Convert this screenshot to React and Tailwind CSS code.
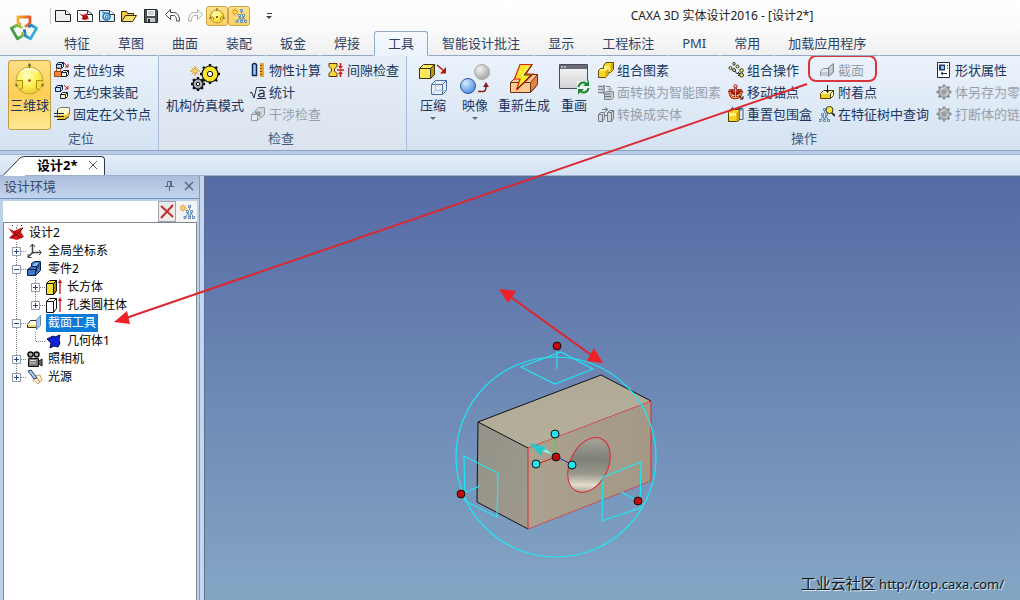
import React from "react";

/* ---------- icon helpers ---------- */

function Svg({ size = 16, children, className = "" }) {
  return (
    <svg
      width={size}
      height={size}
      viewBox={`0 0 ${size} ${size}`}
      className={`block shrink-0 ${className}`}
      fill="none"
      aria-hidden="true"
    >
      {children}
    </svg>
  );
}

function MiniCube({ x, y, fill = "#bfe4ff" }) {
  return (
    <g transform={`translate(${x} ${y})`} stroke="#14224a" strokeLinejoin="round">
      <path d="M.5 2.500 2.500.5h5v4l-2 2h-5z" fill={fill} />
      <path d="M.5 2.500h5v4M5.500 2.500l2-2" />
    </g>
  );
}

function Gear({ cx, cy, r, fill, stroke = "#111" }) {
  return (
    <g transform={`translate(${cx} ${cy})`}>
      {[0, 45, 90, 135].map((a) => (
        <path key={a} d={`M${-r - 2} 0H${r + 2}`} stroke={stroke} strokeWidth="2.500" transform={`rotate(${a})`} />
      ))}
      <circle r={r} fill={fill} stroke={stroke} strokeWidth="1.200" />
      <circle r={r / 3} fill="#fff" stroke={stroke} />
    </g>
  );
}

function Spark({ cx, cy, r }) {
  return (
    <g transform={`translate(${cx} ${cy})`} stroke="#d98c12">
      <path d={`M0 ${-r}V${r}M${-r} 0H${r}`} strokeWidth="1.200" />
      <path d={`M${-r * 0.7} ${-r * 0.7}L${r * 0.7} ${r * 0.7}M${r * 0.7} ${-r * 0.7}L${-r * 0.7} ${r * 0.7}`} />
      <circle r="1.500" fill="#ffe14a" stroke="none" />
    </g>
  );
}

function TreeNodes({ color = "#5d8bb8" }) {
  return (
    <g stroke={color} fill="#eef6ff">
      <path d="M10.500 3v2M9 8 6.500 12M12 8l2.500 4M9 8l1.500 4M12 8l-1.500 4" />
      <path d="M9.500.5h2v2h-2zM7.500 5.500h2v2h-2zM11.500 5.500h2v2h-2zM5 11.500h2v2h-2zM9.500 11.500h2v2h-2zM13.500 11.500h2v2h-2z" />
    </g>
  );
}

const ball = (
  <defs>
    <radialGradient id="ballFill" cx=".4" cy=".32" r=".75">
      <stop offset="0" stopColor="#fffdc4" />
      <stop offset=".55" stopColor="#fdf050" />
      <stop offset="1" stopColor="#e6c02c" />
    </radialGradient>
  </defs>
);

const icons = {
  logo: (
    <Svg size={28}>
      <defs>
        <linearGradient id="logoTop" x2="1">
          <stop offset="0" stopColor="#f6b32c" />
          <stop offset="1" stopColor="#e4572a" />
        </linearGradient>
        <linearGradient id="logoRight" x2="0" y2="1">
          <stop offset="0" stopColor="#3cb0dd" />
          <stop offset="1" stopColor="#2467b4" />
        </linearGradient>
        <linearGradient id="logoLeft" x2="0" y2="1">
          <stop offset="0" stopColor="#3f9b45" />
          <stop offset="1" stopColor="#a9cf45" />
        </linearGradient>
      </defs>
      <g strokeWidth="2.800" strokeLinejoin="round">
        <path d="M11 11 8 9V3h12v6l-5 4" stroke="url(#logoTop)" />
        <path d="M11 11 8 9V3h12v6l-5 4" stroke="url(#logoRight)" transform="rotate(120 14 14)" />
        <path d="M11 11 8 9V3h12v6l-5 4" stroke="url(#logoLeft)" transform="rotate(240 14 14)" />
      </g>
    </Svg>
  ),
  newDoc: (
    <Svg>
      <path d="M.5 2.500h10l5 4v7H.5z" fill="#eceef3" stroke="#222" />
      <path d="M10.500 2.500v4h5" fill="#fff" stroke="#222" />
    </Svg>
  ),
  newPart: (
    <Svg>
      <path d="M.5 2.500h10l5 4v7H.5z" fill="#fff" stroke="#333" />
      <path d="M10.500 2.500v4h5" stroke="#333" />
      <path d="m2 5 4 2 5-2-1 3 2 3-4 1-4-1 2-2z" fill="#d3151c" />
      <path d="m6 7 1 4 4-3" stroke="#611" />
    </Svg>
  ),
  newSheet: (
    <Svg>
      <path d="M.5 2.500h10l5 4v7H.5z" fill="#d8ecfb" stroke="#333" />
      <path d="M10.500 2.500v4h5" fill="#fff" stroke="#333" />
      <circle cx="7.500" cy="8.500" r="3.500" stroke="#1877bd" strokeWidth="1.500" />
      <path d="M7 7h2v3H6zM3 4l3 1" stroke="#1877bd" />
    </Svg>
  ),
  open: (
    <Svg>
      <path d="M.5 13.500v-10h5l1 2h6v3" fill="#f3c944" stroke="#3a2c05" />
      <path d="m.5 13.500 4-6h11l-4 6z" fill="#ffe273" stroke="#3a2c05" />
    </Svg>
  ),
  save: (
    <Svg>
      <path d="M1.500 1.500h12l1 1v12h-13z" fill="#4a4f58" stroke="#23262c" />
      <path d="M4 2h8v6H4z" fill="#f6f7f9" />
      <path d="M4 10h8v4H4z" fill="#c3c7ce" />
      <path d="M5 11h2v3H5z" fill="#23262c" />
      <path d="M5 4h6M5 6h6" stroke="#a6abb5" />
    </Svg>
  ),
  undo: (
    <Svg>
      <path d="m.5 6.500 5-5v3h3c4 0 6 3 6 8.500h-3c0-4-1-5.500-3-5.500h-3v4z" fill="#fff" stroke="#444" strokeLinejoin="round" />
    </Svg>
  ),
  redo: (
    <Svg>
      <path d="m15.500 6.500-5-5v3h-3c-4 0-6 3-6 8.500h3c0-4 1-5.500 3-5.500h3v4z" fill="#fafafa" stroke="#a9adb4" strokeLinejoin="round" />
    </Svg>
  ),
  ballSmall: (
    <Svg>
      <circle cx="8" cy="8.500" r="6.500" fill="url(#ballFill)" stroke="#b8932a" />
      <path d="M8 0v3" stroke="#555" />
      <path d="M1 9h3l1 3M15 9h-3l-1 3" stroke="#b88b10" />
      <path d="M7 8h2v2H7z" fill="#a4571a" />
      <path d="M0 10h2M14 10h2" stroke="#555" />
    </Svg>
  ),
  treeNew: (
    <Svg>
      <g transform="translate(0 1)"><TreeNodes /></g>
      <Spark cx={4} cy={4} r={3.5} />
    </Svg>
  ),
  ballLarge: (
    <Svg size={32}>
      {ball}
      <circle cx="15.500" cy="17.500" r="13.500" fill="url(#ballFill)" stroke="#c3a238" />
      <path d="M15.500 2v5" stroke="#555" />
      <path d="m15.500 0 2 3h-4z" fill="#6b6526" />
      <path d="M7 9q8-6 17 0" stroke="#fffee0" strokeWidth="2" />
      <path d="M2.500 17.500h6v8l-3 1M28.500 17.500h-6v8l3 1" stroke="#a98d14" fill="#f3df36" />
      <path d="M1 20.500l3 1.500-2 2zM30 20.500 27 22l2 2z" fill="#6b6526" />
      <circle cx="15.500" cy="17.500" r="1.300" fill="#b0400e" />
    </Svg>
  ),
  constrain: (
    <Svg>
      <MiniCube x={2} y={0} />
      <path d="m10 1 4 4M14 2v3h-3" stroke="#c61a1a" />
      <path d="M2.500 9V7.500a2 2 0 0 1 4 0V9" stroke="#b65313" />
      <path d="M.5 9.500h7v5h-7z" fill="#f2863a" stroke="#9c420c" />
      <MiniCube x={7} y={8} fill="#fff4b3" />
    </Svg>
  ),
  unconstrain: (
    <Svg>
      <MiniCube x={1} y={1} />
      <path d="m10 1 4 4M14 2v3h-3" stroke="#c61a1a" />
      <MiniCube x={6} y={8} fill="#fff4b3" />
    </Svg>
  ),
  fixParent: (
    <Svg>
      <path d="m3.500 3.500 3-2h9v7l-4 3h-8z" fill="#fff9cf" stroke="#777" />
      <path d="M4 9h8l3-3v4l-4 4H4z" fill="#f2c22b" />
      <path d="M3.500 4v3.500M0 7.500h10M0 10.500h10M3 13.500h8l4-3" stroke="#222" />
    </Svg>
  ),
  mechanism: (
    <Svg size={32}>
      <Spark cx={6} cy={8} r={5} />
      <Gear cx={21} cy={11} r={8} fill="#f9e32c" />
      <Gear cx={9} cy={21} r={5} fill="#aab0ba" />
    </Svg>
  ),
  property: (
    <Svg>
      <path d="M2.500 2.500q2-2 4 0v11h-4z" fill="#9dc7f5" stroke="#15265c" strokeWidth="1.500" />
      <path d="M10 1h4v14h-4z" fill="#e5a62b" />
      <path d="M10 3.500h2M10 6.500h2M10 9.500h2M10 12.500h2" stroke="#7b4c06" />
    </Svg>
  ),
  stats: (
    <Svg>
      <path d="m0 9 1.500-1L4 14 6.500 3.500H16" stroke="#1f2a48" />
      <path d="M9 7q5-2 5 1v5M14 9.500q-5-.5-5.500 2 .5 2.500 5.500.5M7 14.500h9" stroke="#1f2a48" strokeWidth="1.200" />
    </Svg>
  ),
  interfere: (
    <Svg>
      <path d="m5.500 4.500 3-3h6v7l-3 3h-6z" fill="#d5d9de" stroke="#969ca4" />
      <path d="M1.500 8.500 4 6h6v6l-2.500 2.500h-6z" fill="#e9ebee" stroke="#969ca4" />
      <path d="M1.500 8.500h6v6M7.500 8.500 10 6" stroke="#969ca4" />
      <path d="M5 6h5v4H7V8H5z" fill="#989da5" />
    </Svg>
  ),
  gap: (
    <Svg>
      <path d="M1 1.500h8v3L6.500 7v2L9 11.500v3H1v-3L3.500 9V7L1 4.500z" fill="#f8d63b" stroke="#5a3b04" />
      <path d="M9 8h7M12.500 1v5M12.500 10v5" stroke="#c31818" strokeWidth="1.500" />
      <path d="M10 4h5l-2.500 3zM10 12h5l-2.500-3z" fill="#d81b1b" />
    </Svg>
  ),
  compress: (
    <Svg size={32}>
      <path d="m2.500 5.500 4-4h11v10l-4 4h-11z" fill="#fbe65d" stroke="#39330a" />
      <path d="M13.500 5.500v10l4-4v-10z" fill="#b89812" stroke="#39330a" />
      <path d="M2.500 5.500h11l4-4" stroke="#39330a" />
      <path d="m20 2 7 6" stroke="#ba1515" strokeWidth="1.500" />
      <path d="M29 10.500V4l-6 6.500z" fill="#ba1515" />
      <path d="m14.500 21.500 4-4h11v10l-4 4h-11z" fill="#eef4ff" fillOpacity=".5" stroke="#4a6fae" />
      <path d="M14.500 21.500h11v10M25.500 21.500l4-4" stroke="#4a6fae" />
      <path d="M18.500 18v9.500h11M18.500 27.500l-4 4" stroke="#a9bfe0" />
    </Svg>
  ),
  mirror: (
    <Svg size={32}>
      <defs>
        <radialGradient id="mirrorGray" cx=".35" cy=".3" r=".75">
          <stop offset="0" stopColor="#f3f3f3" />
          <stop offset="1" stopColor="#a2a2a2" />
        </radialGradient>
        <radialGradient id="mirrorBlue" cx=".35" cy=".3" r=".75">
          <stop offset="0" stopColor="#d7ecff" />
          <stop offset="1" stopColor="#4b8ce0" />
        </radialGradient>
      </defs>
      <circle cx="23" cy="9" r="7.500" fill="url(#mirrorGray)" stroke="#aaa" />
      <circle cx="9" cy="23" r="7.500" fill="url(#mirrorBlue)" stroke="#39588f" />
      <path d="M19 28.500h5q3 0 3-5" stroke="#8b1c1c" strokeWidth="1.500" />
      <path d="m27 19 3 5h-6z" fill="#8b1c1c" />
    </Svg>
  ),
  regenerate: (
    <Svg size={32}>
      <path d="m2.500 19.500 8-8h19v10l-7 8h-20z" fill="#ffc994" stroke="#6b3210" />
      <path d="M22.500 19.500v10l7-8v-10z" fill="#e38445" stroke="#6b3210" />
      <path d="M2.500 19.500h20" stroke="#6b3210" />
      <path d="M12 1.500h12L18 11h7L8.500 27l3.500-11H6.500z" fill="#ffe62e" stroke="#d8230c" strokeWidth="1.200" />
      <path d="m24 2-8 10h7L9 26" stroke="#3c2a06" />
      <path d="m20 4-6 9" stroke="#fffaa8" />
    </Svg>
  ),
  redraw: (
    <Svg size={32}>
      <defs>
        <linearGradient id="redrawWin" x2="0" y2="1">
          <stop offset="0" stopColor="#fafafa" />
          <stop offset="1" stopColor="#cfd1d5" />
        </linearGradient>
      </defs>
      <path d="M1.500 1.500h28v24h-28z" fill="url(#redrawWin)" stroke="#4a4c57" />
      <path d="M2 2h27v4H2z" fill="#6a6c79" />
      <path d="M3 4h2M6 4h2" stroke="#fff" />
      <path d="M19 18h13v13H19z" fill="#eef3f5" />
      <path d="M20.500 24q1-5 6-4.500l2 1.500M30.500 25q-1 5-6 4.500l-2-1.500" stroke="#168a28" strokeWidth="2" />
      <path d="M31 17.500V23h-6zM20 31.500V26h6z" fill="#168a28" />
    </Svg>
  ),
  combine: (
    <Svg>
      <path d="M5.500 3.500 8 .5h7.500v7l-3 3h-2v2l-3 3h-7v-7l2-2h3z" fill="#f9d527" stroke="#604c05" strokeLinejoin="round" />
      <path d="M6 4h6v4H8l-1 1H1.500L3 7h3z" fill="#fff27a" />
      <path d="m12.500 3.500 2.500-3v6l-2.500 3zM7.500 9.500l3-3v6l-3 3z" fill="#d9a90f" />
    </Svg>
  ),
  faceConvert: (
    <Svg>
      <path d="M0 2.500h6M0 5.500h5M0 8.500h6M6 1v9" stroke="#7f858d" strokeWidth="1.500" />
      <path d="M8 2.500h4v3M10 4.500l2 2 2-2" stroke="#7f858d" />
      <path d="m6.500 9.500 2-2h7v6l-2 2h-7z" fill="#c8ccd1" stroke="#7f858d" />
      <path d="M7 10h6M7 12.500h6" stroke="#6e747c" />
    </Svg>
  ),
  solidConvert: (
    <Svg>
      <path d="M4 3.500h5M7 1.500l3 2-3 2" stroke="#747a82" />
      <path d="m.5 8.500 2-2h4v6l-2 3h-4zM.5 8.500h4v7M9.500 6.500l2-2h4v8l-2 3h-4zM9.500 6.500h4v9M13.500 6.500l2-2" fill="#d5d9dd" stroke="#747a82" />
      <path d="M7 9.500h2" stroke="#747a82" />
    </Svg>
  ),
  combineOps: (
    <Svg>
      <path d="M7 9q1 3 4 3M10 10l2 2-2 2" stroke="#222" />
      <g fill="#e9f08a" stroke="#333">
        <circle cx="2.500" cy="6" r="1.500" />
        <circle cx="6" cy="1.800" r="1.300" />
        <circle cx="9.500" cy="4.500" r="1.500" />
        <circle cx="6" cy="8" r="1.500" />
        <circle cx="13.500" cy="8.500" r="1.800" fill="#e9ee45" />
        <circle cx="13.500" cy="13" r="2" fill="#e9ee45" />
      </g>
    </Svg>
  ),
  anchor: (
    <Svg>
      <path d="M7.500 3v11M2 7v3q1 4 5.500 4T13 10V7M4.500 5v3q0 2 3 2t3-2V5" stroke="#a01808" strokeWidth="2.500" />
      <path d="M7.500 2v12M2 8v2q1 4 5.500 4T13 10V8" stroke="#f3bf3a" />
      <circle cx="7.500" cy="2.300" r="1.600" stroke="#a01808" />
      <path d="m0 8.500 2-3.500 2 3.500M11 8.500 13 5l2 3.500" stroke="#a01808" />
      <path d="m11 12 4 3M15 12v3h-3" stroke="#3a1208" />
    </Svg>
  ),
  resetBox: (
    <Svg>
      <path d="M3 2.500h12v11M4.500.5v4M13 1v4M11 13.500h4" stroke="#3d5b88" />
      <path d="M.5 6.500q0-3 3-3h8v9q0 3-3 3h-8z" fill="#f6d322" stroke="#514203" />
      <path d="M1 7h7v3H1z" fill="#fff581" />
      <path d="M8.500 7v8l3-3V4z" fill="#cda011" />
    </Svg>
  ),
  section: (
    <Svg>
      <path d="m1.500 9.500 3-3h5v7h-8z" fill="#e7eaed" stroke="#858b93" />
      <path d="M2 10h7v4H2z" fill="#c7cbd0" />
      <path d="m9.500 5.500 5-4v9l-5 4z" fill="#b7bcc2" stroke="#858b93" />
      <path d="m11.500 5 1-1v6l-1 1z" fill="#e7eaed" />
    </Svg>
  ),
  attach: (
    <Svg>
      <path d="m1.500 9.500 3-3h10v5l-3 3h-10z" fill="#fff6b1" stroke="#4d4412" />
      <path d="M2 10h9v4H2z" fill="#f4cf1d" />
      <path d="M11.500 9.500v5M11.500 9.500l3-3" stroke="#4d4412" />
      <path d="M8.500 1v7" stroke="#222" />
      <path d="M6 6h5L8.500 9z" fill="#222" />
    </Svg>
  ),
  findTree: (
    <Svg>
      <g transform="translate(-5 2)"><TreeNodes color="#5a86b1" /></g>
      <circle cx="10.500" cy="4" r="3.500" fill="#ffe536" stroke="#333" />
      <path d="m13 7 3 3" stroke="#333" strokeWidth="2" />
    </Svg>
  ),
  shape: (
    <Svg>
      <path d="M1.500.5h12v15h-12z" fill="#fff" stroke="#1f2a48" />
      <path d="M3 2.500h6v6H3z" fill="#1d3c6d" />
      <path d="M5 4h3v3H5z" fill="#9ac7f0" />
      <path d="M11 3.500h1M11 6h1M5 11.500h6M7 10l-2 1.500L7 13" stroke="#1f2a48" />
    </Svg>
  ),
  gearGray: (
    <Svg>
      <Gear cx={8} cy={8} r={5.5} fill="#b3b7bc" stroke="#8a8f96" />
      <path d="m4 6 5-3M10 12l3-4" stroke="#dfe2e5" />
      <circle cx="8" cy="8" r="2" fill="#989da4" />
    </Svg>
  ),
  redX: (
    <Svg>
      <path d="m2 2 12 11M14 1 2 14" stroke="#c92a2a" strokeWidth="2" />
    </Svg>
  ),
  design: (
    <Svg>
      <path d="m0 3 6 3 9-4-2 5 3 5-7 3-8-2 4-4z" fill="#d21a1e" />
      <path d="m6 6 2 4 7-7M8 10l-6 3M8 10l6 3" stroke="#6b0b0c" />
      <path d="M4 .5h1M9 0h1M13 .5h1M8 3h1" stroke="#222" />
    </Svg>
  ),
  axes: (
    <Svg>
      <path d="M5.500 11V1M5.500 9.500H14M5.500 9.500 1 14" stroke="#444" strokeWidth="1.500" />
      <path d="m3 4 2.500-3L8 4M12 7l2.500 2.500L12 12M1 11v3.500h3.500" stroke="#444" />
    </Svg>
  ),
  part: (
    <Svg>
      <path d="m.5 8.500 4-3v-3l3-2h6v9l-5 5h-8z" fill="#3b78c8" stroke="#0d2148" />
      <path d="M.5 8.500h8v6M4.500 5.500h5l4-4M9.500 5.500v5M8.500 8.500l4-4" stroke="#0d2148" />
      <path d="m5 5 3-3h4L9.500 5z" fill="#8dbdf2" />
    </Svg>
  ),
  box: (
    <Svg>
      <path d="m.5 4.500 3-3h7v10l-3 4h-7z" fill="#f7dd39" stroke="#111" />
      <path d="M7.500 4.500v11l3-4v-10z" fill="#a58b10" stroke="#111" />
      <path d="M.5 4.500h7l3-3" stroke="#111" />
      <path d="M14 15V3" stroke="#c51616" strokeWidth="1.300" />
      <path d="m14 0 2 4h-4z" fill="#c51616" />
    </Svg>
  ),
  hole: (
    <Svg>
      <path d="m.5 4.500 3-3h7v10l-3 4h-7zM.5 4.500h7v11M7.500 4.500l3-3" fill="#fff" stroke="#111" />
      <path d="M14 15V3" stroke="#c51616" strokeWidth="1.300" />
      <path d="m14 0 2 4h-4z" fill="#c51616" />
    </Svg>
  ),
  sectionColor: (
    <Svg>
      <path d="m.5 9.500 3-4h6v7h-9z" fill="#fffce0" stroke="#333" />
      <path d="M1 10h8v2H1z" fill="#f2db4d" />
      <path d="m9.500 4.500 4-4v10l-4 4z" fill="#a8cbe8" stroke="#6b8ba8" />
    </Svg>
  ),
  geometry: (
    <Svg>
      <path d="m1 6 6-3 2 1 5-2-1 5 1 3-2 4-4-1-4 2 1-5z" fill="#1123d8" stroke="#060b55" />
    </Svg>
  ),
  camera: (
    <Svg>
      <circle cx="3.500" cy="3.500" r="2.500" fill="#aaa" stroke="#111" strokeWidth="1.500" />
      <circle cx="9.500" cy="3.500" r="2.500" fill="#aaa" stroke="#111" strokeWidth="1.500" />
      <path d="M1.500 7.500h10v8h-10z" fill="#777" stroke="#111" />
      <path d="m12 10 3-2v7l-3-2" fill="#666" stroke="#111" />
      <path d="M3 9.500h6M3 12h6" stroke="#ddd" />
    </Svg>
  ),
  light: (
    <Svg>
      <path d="m7 7 6-1 2 5-4 4-5-4z" fill="#fff1c8" stroke="#c5a36b" />
      <path d="m1 2 3-1 6 8-3 1z" fill="#a8cbf0" stroke="#234174" />
      <path d="m10 9 3 4" stroke="#d77a4a" />
    </Svg>
  ),
};

/* ---------- ribbon ---------- */

const tabs = ["特征", "草图", "曲面", "装配", "钣金", "焊接", "工具", "智能设计批注", "显示", "工程标注", "PMI", "常用", "加载应用程序"];

function SmallButton({ icon, label, disabled, marked }) {
  return (
    <button
      type="button"
      disabled={disabled}
      className={`relative flex h-[22px] items-center gap-[3px] whitespace-nowrap ${disabled ? "text-[#97a0ab]" : "text-[#20365f]"}`}
    >
      {icons[icon]}
      <span>{label}</span>
      {marked && <span className="absolute -top-1 -right-[13px] -left-[11px] h-[27px] rounded-lg border-2 border-[#d9353f]" />}
    </button>
  );
}

function Column({ items, className = "" }) {
  return (
    <div className={`flex shrink-0 flex-col items-start ${className}`}>
      {items.map((item) => (
        <SmallButton key={item.label} {...item} />
      ))}
    </div>
  );
}

function LargeButton({ icon, label, active, menu, className }) {
  return (
    <button
      type="button"
      className={`mt-px flex h-[70px] shrink-0 flex-col items-center whitespace-nowrap rounded-[3px] border pt-0.5 text-[#20365f] ${
        active ? "border-[#c29b3d] bg-linear-to-b from-[#fcdf86] via-[#fdce54] to-[#fee993]" : "border-transparent"
      } ${className}`}
    >
      {icons[icon]}
      <span className="leading-5">{label}</span>
      {menu && <span className="mt-0.5 border-x-[3px] border-t-[3px] border-x-transparent border-t-[#5f6b7c]" />}
    </button>
  );
}

function Group({ title, className, children }) {
  return (
    <section className={`flex shrink-0 flex-col border-r border-[#a9bdd8] ${className}`}>
      <div className="flex h-[72px] pt-[3px]">{children}</div>
      <h2 className="flex h-[22px] items-center justify-center pr-1 pb-0.5 text-[#405a80]">{title}</h2>
    </section>
  );
}

function Ribbon() {
  return (
    <div className="flex shrink-0 overflow-hidden border-b border-[#8da2c2] bg-linear-to-b from-[#ebf3fc] to-[#d5e2f2]">
      <Group title="定位" className="w-[159px] pl-2">
        <LargeButton icon="ballLarge" label="三维球" active className="w-[43px]" />
        <Column
          className="ml-[3px]"
          items={[
            { icon: "constrain", label: "定位约束" },
            { icon: "unconstrain", label: "无约束装配" },
            { icon: "fixParent", label: "固定在父节点" },
          ]}
        />
      </Group>
      <Group title="检查" className="w-[248px] bg-linear-to-b from-[#e6eef8] to-[#dbe3ee] pl-px">
        <LargeButton icon="mechanism" label="机构仿真模式" className="w-[90px]" />
        <Column
          className="w-[78px]"
          items={[
            { icon: "property", label: "物性计算" },
            { icon: "stats", label: "统计" },
            { icon: "interfere", label: "干涉检查", disabled: true },
          ]}
        />
        <Column items={[{ icon: "gap", label: "间隙检查" }]} />
      </Group>
      <Group title="操作" className="w-[794px] pl-[5px]">
        <LargeButton icon="compress" label="压缩" menu className="w-[42px]" />
        <LargeButton icon="mirror" label="映像" menu className="w-[42px]" />
        <LargeButton icon="regenerate" label="重新生成" className="w-[56px]" />
        <LargeButton icon="redraw" label="重画" className="w-[44px]" />
        <Column
          className="ml-0.5 w-[130px]"
          items={[
            { icon: "combine", label: "组合图素" },
            { icon: "faceConvert", label: "面转换为智能图素", disabled: true },
            { icon: "solidConvert", label: "转换成实体", disabled: true },
          ]}
        />
        <Column
          className="w-[91px]"
          items={[
            { icon: "combineOps", label: "组合操作" },
            { icon: "anchor", label: "移动锚点" },
            { icon: "resetBox", label: "重置包围盒" },
          ]}
        />
        <Column
          className="w-[117px]"
          items={[
            { icon: "section", label: "截面", disabled: true, marked: true },
            { icon: "attach", label: "附着点" },
            { icon: "findTree", label: "在特征树中查询" },
          ]}
        />
        <Column
          items={[
            { icon: "shape", label: "形状属性" },
            { icon: "gearGray", label: "体另存为零", disabled: true },
            { icon: "gearGray", label: "打断体的链", disabled: true },
          ]}
        />
      </Group>
    </div>
  );
}

/* ---------- header ---------- */

const quick = [
  ["newDoc", "新建"],
  ["newPart", "新建设计"],
  ["newSheet", "新建图纸"],
  ["open", "打开"],
  ["save", "保存"],
  ["undo", "撤销"],
  ["redo", "重做"],
];

function Header() {
  return (
    <header className="flex h-14 shrink-0 bg-linear-to-b from-white via-[#fbfbfb] to-[#efefef]">
      <button type="button" aria-label="菜单" className="flex w-[50px] shrink-0 items-center border-b border-[#92a8c6] pl-[10px]">
        {icons.logo}
      </button>
      <div className="flex min-w-0 flex-1 flex-col">
        <div className="flex h-[31px] shrink-0 items-center">
          <div className="flex items-center gap-1.5 border-l border-[#c6c6c6] pl-1">
            {quick.map(([icon, label]) => (
              <button key={icon} type="button" aria-label={label}>
                {icons[icon]}
              </button>
            ))}
          </div>
          <div className="ml-[3px] flex">
            {[["ballSmall", "三维球"], ["treeNew", "设计树"]].map(([icon, label]) => (
              <button
                key={icon}
                type="button"
                aria-label={label}
                className="flex h-5 w-[22px] items-center justify-center rounded-[3px] border border-[#cfa545] bg-linear-to-b from-[#fde08b] to-[#fdd264]"
              >
                {icons[icon]}
              </button>
            ))}
          </div>
          <button type="button" aria-label="自定义" className="ml-4 flex flex-col items-center gap-0.5">
            <span className="h-px w-[5px] bg-[#444]" />
            <span className="border-x-[3px] border-t-[3px] border-x-transparent border-t-[#444]" />
          </button>
          <h1 className="flex-1 pl-[152px] text-center text-xs whitespace-nowrap text-[#222]">CAXA 3D 实体设计2016 - [设计2*]</h1>
        </div>
        <nav className="flex h-[25px] shrink-0 whitespace-nowrap text-[#2e4263]">
          {tabs.map((tab) => (
            <button
              key={tab}
              type="button"
              className={`rounded-t-[3px] border px-[13px] pb-0.5 ${
                tab === "工具" ? "border-[#92a8c6] border-b-[#ebf3fc] bg-linear-to-b from-[#f6fafe] to-[#ebf3fc]" : "border-transparent border-b-[#92a8c6]"
              }`}
            >
              {tab}
            </button>
          ))}
          <span className="flex-1 border-b border-[#92a8c6]" />
        </nav>
      </div>
    </header>
  );
}

/* ---------- design tree ---------- */

const rows = [
  { icon: "design", label: "设计2", cells: [] },
  { icon: "axes", label: "全局坐标系", cells: ["+"] },
  { icon: "part", label: "零件2", cells: ["-"] },
  { icon: "box", label: "长方体", cells: ["|", "+"] },
  { icon: "hole", label: "孔类圆柱体", cells: ["|", "+end"] },
  { icon: "sectionColor", label: "截面工具", cells: ["-"], selected: true },
  { icon: "geometry", label: "几何体1", cells: ["|", "end"] },
  { icon: "camera", label: "照相机", cells: ["+"] },
  { icon: "light", label: "光源", cells: ["+end"] },
];

function TreeCell({ kind }) {
  const last = kind.endsWith("end");
  const boxed = kind[0] === "+" || kind[0] === "-";
  return (
    <svg width="19" height="18" className="block shrink-0" aria-hidden="true">
      <path d={last ? "M9.500 0v9" : "M9.500 0v18"} stroke="#808080" strokeDasharray="1 1" />
      {kind !== "|" && <path d="M10 9.500h9" stroke="#808080" strokeDasharray="1 1" />}
      {boxed && <path d="M5.500 5.500h8v8h-8z" fill="#fff" stroke="#8f9bab" />}
      {boxed && <path d={kind[0] === "+" ? "M7 9.500h5M9.500 7v5" : "M7 9.500h5"} stroke="#2b4a86" />}
    </svg>
  );
}

function DesignPanel() {
  return (
    <aside className="flex w-[200px] shrink-0 flex-col border-r border-[#7f9cc4] bg-[#bdd0ea]">
      <div className="flex h-[22px] shrink-0 items-center bg-linear-to-b from-[#a9bddb] to-[#c3d5ed] pr-[5px] pb-0.5 pl-1 text-[#35496b]">
        <h2 className="flex-1">设计环境</h2>
        <button type="button" aria-label="固定" className="mr-2.5">
          <svg width="9" height="10" className="block" fill="none" stroke="#58677e">
            <path d="M2.500 5.500v-5h4v5M0 5.500h9M4.500 6v4M5.500 1v4" />
          </svg>
        </button>
        <button type="button" aria-label="关闭">
          <svg width="10" height="10" className="block" stroke="#58677e" strokeWidth="1.500">
            <path d="m1 1 8 8M9 1 1 9" />
          </svg>
        </button>
      </div>
      <div className="flex min-h-0 flex-1 flex-col border-t border-[#6f8fbd] pt-0.5 pr-0.5 pl-[3px]">
        <div className="flex h-[21px] shrink-0 bg-[#e9eef4]">
          <input type="text" aria-label="搜索" className="min-w-0 flex-1 bg-white px-1 text-xs outline-none" />
          <button type="button" aria-label="清除" className="flex w-[18px] items-center justify-center border border-[#a0a4aa] bg-[#ececec]">
            {icons.redX}
          </button>
          <button type="button" aria-label="新建节点" className="flex w-[21px] items-center justify-center bg-[#f3f3f3]">
            {icons.treeNew}
          </button>
        </div>
        <ul className="flex-1 border border-b-0 border-[#7c8794] bg-white pt-px pl-[3px] text-xs text-black">
          {rows.map(({ icon, label, cells, selected }) => (
            <li key={label} className="flex h-[18px] items-center">
              {cells.map((kind, i) => (
                <TreeCell key={i} kind={kind} />
              ))}
              <span className="ml-px">{icons[icon]}</span>
              <span className={`ml-[3px] px-0.5 leading-[18px] ${selected ? "bg-[#0c7bd8] text-white" : ""}`}>{label}</span>
            </li>
          ))}
        </ul>
      </div>
    </aside>
  );
}

/* ---------- 3D scene ---------- */

function Scene() {
  const handle = (x, y, fill) => <circle key={`${x}-${y}`} cx={x} cy={y} r="4" fill={fill} stroke="#111" />;
  return (
    <svg width="100%" height="100%" className="absolute inset-0" fill="none" role="img" aria-label="三维模型">
      <defs>
        <linearGradient id="faceTop" x2="0" y2="1">
          <stop offset="0" stopColor="#b0aa97" />
          <stop offset="1" stopColor="#b6ae9b" />
        </linearGradient>
        <linearGradient id="faceSide" x2="1" y2="1">
          <stop offset="0" stopColor="#939389" />
          <stop offset="1" stopColor="#9f998c" />
        </linearGradient>
        <linearGradient id="faceFront" x2="1" y2="0">
          <stop offset="0" stopColor="#aca08e" />
          <stop offset="1" stopColor="#a39885" />
        </linearGradient>
        <linearGradient id="bore" x1=".35" y1="0" x2=".65" y2="1">
          <stop offset="0" stopColor="#a8a698" />
          <stop offset=".4" stopColor="#7f8078" />
          <stop offset=".65" stopColor="#98978b" />
          <stop offset=".85" stopColor="#e1dccb" />
          <stop offset="1" stopColor="#9e998a" />
        </linearGradient>
      </defs>
      <g transform="translate(-205 -177)">
        <path d="M478 422 601 375 651 401 528 448z" fill="url(#faceTop)" />
        <path d="M478 422 528 448V529L477 502z" fill="url(#faceSide)" />
        <path d="M528 448 651 401V481L528 529z" fill="url(#faceFront)" />
        <path d="M528 448 478 422 601 375 651 401M478 422 477 502 528 529" stroke="#111" />
        <path d="M528 448 651 401M651 481 528 529" stroke="#e32a36" strokeDasharray="2 1" />
        <path d="M528 448v81M651 401v80" stroke="#d92a35" />
        <ellipse cx="589" cy="465" rx="19" ry="29" transform="rotate(26 589 465)" fill="url(#bore)" stroke="#dd2630" />
        <g stroke="#22e5f3" strokeWidth="1.200">
          <circle cx="556" cy="457" r="100" />
          <path d="M521 367 561 352 593 369 555 384zM557 350v19" />
          <path d="M464 456 498 473 497 517 465 501zM464 493l16-7" />
          <path d="M603 477 641 462 640 508 602 521zM621 492l15 8" />
        </g>
        <path d="M555 438v16" stroke="#46d838" />
        <path d="m540 463 13-5" stroke="#d71c1c" />
        <path d="m559 458 10 5" stroke="#1e22bd" />
        <path d="m540 447 13 8" stroke="#2fe0e6" strokeWidth="2" />
        <path d="m529 443 17 4-3 3-2 6z" fill="#25c9cd" />
        <path d="m542 451 5-1 4 4z" fill="#9df4f0" />
        {handle(555, 434, "#22e5f3")}
        {handle(536, 464, "#22e5f3")}
        {handle(572, 465, "#22e5f3")}
        {handle(556, 457, "#c40808")}
        {handle(557, 346, "#c40808")}
        {handle(461, 494, "#c40808")}
        {handle(638, 501, "#c40808")}
        <path d="m508 295 86 62" stroke="#e0232e" strokeWidth="2" />
        <path d="m499 289 17 2-8 12zM603 363l-9-15-7 13z" fill="#ee2028" />
      </g>
    </svg>
  );
}

/* ---------- page ---------- */

export default function App() {
  return (
    <div className="relative flex h-screen flex-col overflow-hidden bg-[#c5d6ee] font-['Noto_Sans','Noto_Sans_CJK_SC',sans-serif] text-[13px] leading-5">
      <Header />
      <Ribbon />
      <div className="h-1 shrink-0 border-b border-[#9fb4d2] bg-[#b9cbe6]" />
      <div className="flex h-[21px] shrink-0 border-b border-[#9bb0cf] bg-linear-to-b from-[#e4eefa] to-[#d3e1f3] pl-[3px]">
        <svg width="22" height="20" className="mt-px block shrink-0" aria-hidden="true">
          <path d="M0 20 17 2Q19 .5 22 .5V20z" fill="#fff" />
          <path d="M0 19.500 17 2Q19 .5 22 .5" fill="none" stroke="#2f3b4e" />
        </svg>
        <div className="mt-px flex w-[80px] items-center rounded-tr-sm border-t border-r border-[#2f3b4e] bg-white pb-0.5 pl-3 font-bold text-black">
          <span className="leading-4">设计2*</span>
          <button type="button" aria-label="关闭标签" className="ml-3">
            <svg width="8" height="8" className="block" stroke="#555">
              <path d="m0 0 8 8M8 0 0 8" />
            </svg>
          </button>
        </div>
      </div>
      <main className="flex min-h-0 flex-1">
        <DesignPanel />
        <div className="w-1 shrink-0 bg-[#c5d6ee]" />
        <section className="relative flex min-w-0 flex-1 items-end justify-end border-t border-l border-[#5d6f8f] bg-linear-to-b from-[#566aa4] to-[#84a6c4]">
          <Scene />
          <p className="relative pr-4 pb-1.5 text-[#10151c] [text-shadow:1px_1px_0_#dbe6f0]">
            <span className="text-[15px]">工业云社区</span> http://top.caxa.com/
          </p>
        </section>
      </main>
      <svg className="pointer-events-none absolute inset-0" width="100%" height="100%" aria-hidden="true">
        <path d="M126 318 807 84" stroke="#dd2730" strokeWidth="2" />
        <path d="m114 322 13-11 3 13z" fill="#ee2028" />
      </svg>
    </div>
  );
}
